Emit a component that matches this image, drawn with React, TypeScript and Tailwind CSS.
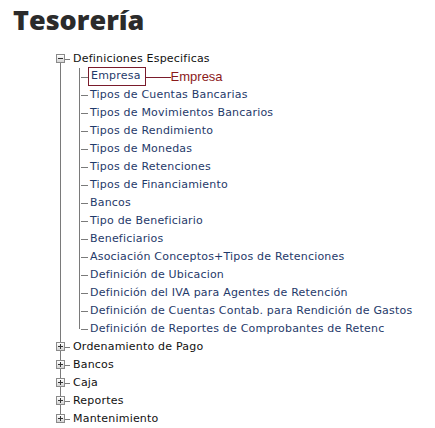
import React from "react";

const childrenItems = [
  "Empresa",
  "Tipos de Cuentas Bancarias",
  "Tipos de Movimientos Bancarios",
  "Tipos de Rendimiento",
  "Tipos de Monedas",
  "Tipos de Retenciones",
  "Tipos de Financiamiento",
  "Bancos",
  "Tipo de Beneficiario",
  "Beneficiarios",
  "Asociación Conceptos+Tipos de Retenciones",
  "Definición de Ubicacion",
  "Definición del IVA para Agentes de Retención",
  "Definición de Cuentas Contab. para Rendición de Gastos",
  "Definición de Reportes de Comprobantes de Retenc",
];

const topItems = ["Ordenamiento de Pago", "Bancos", "Caja", "Reportes", "Mantenimiento"];

function ToggleBox({ open }: { open: boolean }) {
  return (
    <div className="relative h-[9px] w-[9px] shrink-0 border border-[#8a8a8a] bg-gradient-to-b from-white to-[#d4d4d4]">
      <div className="absolute left-[1px] top-[3px] h-px w-[5px] bg-[#333]" />
      {!open && <div className="absolute left-[3px] top-[1px] h-[5px] w-px bg-[#333]" />}
    </div>
  );
}

function TopRow({ label, open, first, last }: { label: string; open: boolean; first?: boolean; last?: boolean }) {
  return (
    <div className="flex h-[18px] items-stretch pl-[56px]">
      <div className="flex w-[9px] shrink-0 flex-col items-center">
        <div className={`h-[4px] w-px ${first ? "" : "bg-[#7a7a7a]"}`} />
        <ToggleBox open={open} />
        <div className={`w-px flex-1 ${last ? "" : "bg-[#7a7a7a]"}`} />
      </div>
      <div className="flex w-[5px] shrink-0 items-center">
        <div className="h-px w-full bg-[#7a7a7a]" />
      </div>
      <div className="ml-[3px] flex items-center whitespace-nowrap text-[#111]">{label}</div>
    </div>
  );
}

function ChildRow({ label, last, selected }: { label: string; last?: boolean; selected?: boolean }) {
  return (
    <div className="flex h-[18px] items-stretch pl-[56px]">
      <div className="flex w-[9px] shrink-0 justify-center">
        <div className="w-px bg-[#7a7a7a]" />
      </div>
      <div className="w-[13px] shrink-0" />
      <div className="flex w-[3px] shrink-0 flex-col items-center">
        <div className="h-[9px] w-px bg-[#7a7a7a]" />
        <div className={`w-px flex-1 ${last ? "" : "bg-[#7a7a7a]"}`} />
      </div>
      <div className="flex w-[7px] shrink-0 items-center">
        <div className="h-px w-full bg-[#7a7a7a]" />
      </div>
      {selected ? (
        <div className="flex items-center">
          <div className="-mt-px flex h-[19px] items-center border border-[#7a1b2b] pl-[2px] pr-[4px] text-[#1f3a6a]">
            {label}
          </div>
          <div className="h-px w-[25px] bg-[#7a1b2b]" />
          <div
            className="text-[13px] tracking-normal text-[#8b1a1a]"
            style={{ fontFamily: '"Liberation Sans", Arial, sans-serif' }}
          >
            Empresa
          </div>
        </div>
      ) : (
        <div className="ml-[2px] flex items-center whitespace-nowrap text-[#1f3a6a]">{label}</div>
      )}
    </div>
  );
}

export default function App() {
  return (
    <div className="h-[428px] w-[435px] overflow-hidden bg-white">
      <h1
        className="pl-[13px] pt-[6px] text-[27px] font-extrabold leading-[27px] text-[#2b2b2b]"
        style={{ fontFamily: '"Open Sans", sans-serif' }}
      >
        Tesorería
      </h1>
      <div
        className="mt-[17px] text-[11px] tracking-[0.2px]"
        style={{ fontFamily: '"DejaVu Sans", Verdana, sans-serif' }}
      >
        <TopRow label="Definiciones Especificas" open first />
        {childrenItems.map((c, i) => (
          <ChildRow key={i} label={c} selected={i === 0} last={i === childrenItems.length - 1} />
        ))}
        {topItems.map((t, i) => (
          <TopRow key={t} label={t} open={false} last={i === topItems.length - 1} />
        ))}
      </div>
    </div>
  );
}
